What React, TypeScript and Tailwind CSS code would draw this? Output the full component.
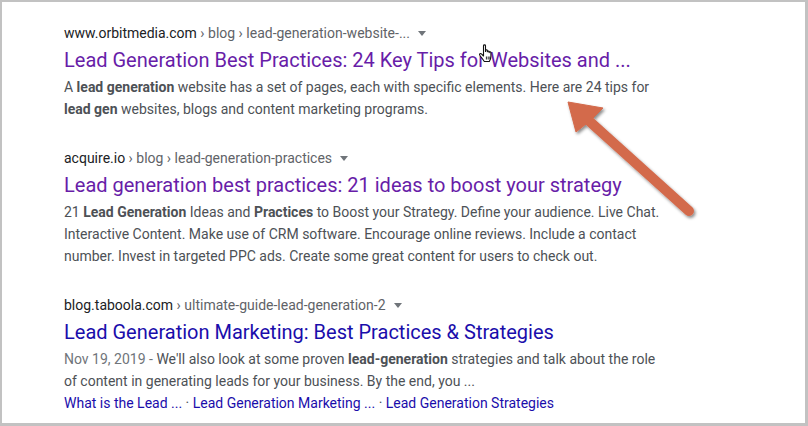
import type { ReactNode } from "react";

type Result = {
  domain: string;
  path: string;
  title: string;
  visited: boolean;
  snippet: ReactNode[];
  sitelinks?: string[];
};

const results: Result[] = [
  {
    domain: "www.orbitmedia.com",
    path: " › blog › lead-generation-website-...",
    title: "Lead Generation Best Practices: 24 Key Tips for Websites and ...",
    visited: true,
    snippet: [
      <>
        A <b className="font-bold">lead generation</b> website has a set of pages, each with specific
        elements. Here are 24 tips for
      </>,
      <>
        <b className="font-bold">lead gen</b> websites, blogs and content marketing programs.
      </>,
    ],
  },
  {
    domain: "acquire.io",
    path: " › blog › lead-generation-practices",
    title: "Lead generation best practices: 21 ideas to boost your strategy",
    visited: true,
    snippet: [
      <>
        21 <b className="font-bold">Lead Generation</b> Ideas and{" "}
        <b className="font-bold">Practices</b> to Boost your Strategy. Define your audience. Live
        Chat.
      </>,
      <>
        Interactive Content. Make use of CRM software. Encourage online reviews. Include a contact
      </>,
      <>number. Invest in targeted PPC ads. Create some great content for users to check out.</>,
    ],
  },
  {
    domain: "blog.taboola.com",
    path: " › ultimate-guide-lead-generation-2",
    title: "Lead Generation Marketing: Best Practices & Strategies",
    visited: false,
    snippet: [
      <>
        <span className="text-[#70757a]">Nov 19, 2019 - </span>We'll also look at some proven{" "}
        <b className="font-bold">lead-generation</b> strategies and talk about the role
      </>,
      <>of content in generating leads for your business. By the end, you ...</>,
    ],
    sitelinks: ["What is the Lead ...", "Lead Generation Marketing ...", "Lead Generation Strategies"],
  },
];

function Caret() {
  return (
    <svg width="8" height="5" viewBox="0 0 8 5" className="ml-[8px]">
      <path d="M0 0 L8 0 L4 5 Z" fill="#70757a" />
    </svg>
  );
}

function ResultItem({ r }: { r: Result }) {
  return (
    <div>
      <div className="flex h-[20px] items-center text-[14px] leading-[20px]">
        <span className="whitespace-pre">
          <span className="text-[#202124]">{r.domain}</span>
          <span className="text-[#5f6368]">{r.path}</span>
        </span>
        <Caret />
      </div>
      <h3
        className={`mb-[3px] pt-[4px] text-[20px] leading-[26px] font-normal ${
          r.visited ? "text-[#681da8]" : "text-[#1a0dab]"
        }`}
      >
        {r.title}
      </h3>
      <div className="text-[14px] leading-[22px] text-[#4d5156]">
        {r.snippet.map((line, i) => (
          <div key={i} className="whitespace-nowrap">
            {line}
          </div>
        ))}
        {r.sitelinks && (
          <div className="whitespace-nowrap text-[#1a0dab]">
            {r.sitelinks.map((s, i) => (
              <span key={s}>
                {i > 0 && <span className="text-[#4d5156]"> · </span>}
                {s}
              </span>
            ))}
          </div>
        )}
      </div>
    </div>
  );
}

function Arrow() {
  return (
    <svg
      className="pointer-events-none absolute left-0 top-0"
      width="808"
      height="426"
      viewBox="0 0 808 426"
    >
      <defs>
        <filter id="sh" x="-20%" y="-20%" width="140%" height="140%">
          <feDropShadow dx="1.5" dy="2" stdDeviation="1.5" floodColor="#000" floodOpacity="0.45" />
        </filter>
      </defs>
      <g filter="url(#sh)" fill="#d36a4c" stroke="#d36a4c">
        <line x1="586" y1="118" x2="687" y2="209" strokeWidth="10" strokeLinecap="round" />
        <path d="M566 100 L601 106 L589 118 L574 130 Z" strokeWidth="1" strokeLinejoin="round" />
      </g>
    </svg>
  );
}

function HandCursor() {
  return (
    <svg
      className="pointer-events-none absolute left-[476px] top-[42px]"
      width="18"
      height="19"
      viewBox="0 0 18 19"
    >
      <path
        d="M5.5 1.8 C5.5 0.6 7.5 0.6 7.5 1.8 L7.5 7.5 L7.5 6.6 C7.5 5.6 9.3 5.6 9.3 6.6 L9.3 7.8 C9.3 6.8 11.1 6.8 11.1 7.8 L11.1 8.6 C11.1 7.6 12.9 7.6 12.9 8.6 L12.9 12.5 C12.9 14.8 11.8 16.5 11.3 17.5 L6.3 17.5 C5 15.6 3.2 13.2 1.8 11.2 C1 10 2.4 8.9 3.4 9.9 L5.5 12 Z"
        fill="#fff"
        stroke="#111"
        strokeWidth="1.1"
        strokeLinejoin="round"
      />
      <path d="M8.4 12.5 L8.4 15.5 M10.2 12.5 L10.2 15.5 M11.9 12.5 L11.9 15.2" stroke="#111" strokeWidth="0.9" />
    </svg>
  );
}

export default function App() {
  return (
    <div
      className="relative h-[426px] w-[808px] overflow-hidden border-t-2 border-l-2 border-r-[3px] border-b-[3px] border-[#c2c2c2] bg-white"
      style={{ fontFamily: "Roboto, 'Liberation Sans', Arial, sans-serif" }}
    >
      <div className="flex flex-col gap-[28px] pl-[62px] pt-[21px]">
        {results.map((r) => (
          <ResultItem key={r.domain} r={r} />
        ))}
      </div>
      <HandCursor />
      <Arrow />
    </div>
  );
}
